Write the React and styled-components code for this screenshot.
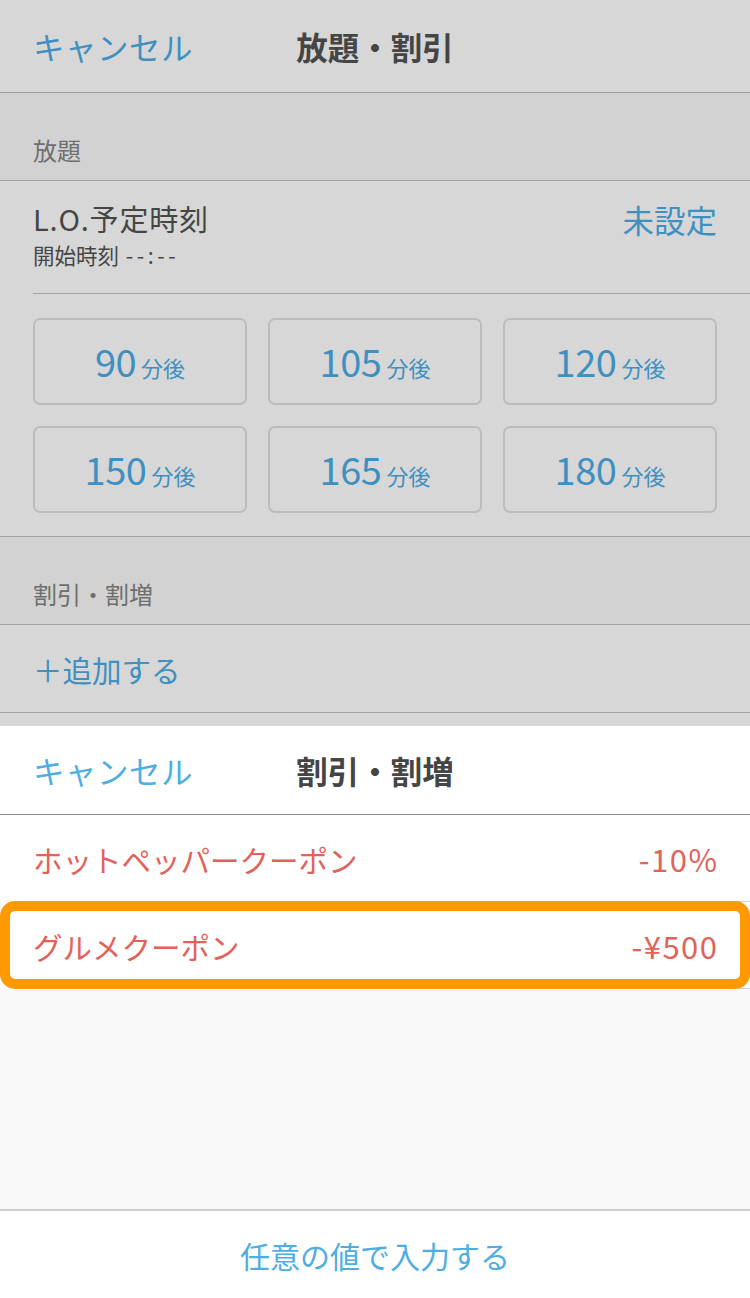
import React from "react";
import styled, { createGlobalStyle } from "styled-components";

const GlobalStyle = createGlobalStyle`
  html, body {
    margin: 0;
    padding: 0;
    background: #ffffff;
  }
  body {
    font-family: "Noto Sans CJK JP", "Noto Sans", sans-serif;
  }
`;

const DIM_BLUE = "#3f90c1";
const BLUE = "#4eaee2";
const RED = "#e2625a";

const Screen = styled.div`
  width: 750px;
  height: 1298px;
  display: flex;
  flex-direction: column;
  overflow: hidden;
`;

const BackPage = styled.div`
  background: #d7d7d7;
  height: 726px;
  display: flex;
  flex-direction: column;
  flex-shrink: 0;
`;

const NavBar = styled.div`
  position: relative;
  display: flex;
  align-items: center;
  padding: 0 33px;
  border-bottom: 1px solid #9a9a9a;
  background: ${(p) => (p.$light ? "#ffffff" : "transparent")};
  box-sizing: border-box;
  height: 89px;
`;

const NavCancel = styled.span`
  font-size: 31.5px;
  color: ${(p) => p.$color};
  letter-spacing: 0.5px;
`;

const NavTitle = styled.span`
  position: absolute;
  left: 0;
  right: 0;
  text-align: center;
  font-size: 31.5px;
  font-weight: 700;
  color: #454545;
  pointer-events: none;
`;

const TopBar = styled(NavBar)`
  height: 93px;
`;

const SectionHeader = styled.div`
  height: 88px;
  box-sizing: border-box;
  background: #d2d2d2;
  border-bottom: 1px solid #a3a3a3;
  display: flex;
  align-items: flex-end;
  padding: 0 33px 13px;
  font-size: 24px;
  color: #6e6e6e;
`;

const TimeRow = styled.div`
  margin-left: 33px;
  padding-right: 33px;
  height: 113px;
  box-sizing: border-box;
  border-bottom: 1px solid #a3a3a3;
  display: flex;
  justify-content: space-between;
  align-items: flex-start;
  padding-top: 18px;
`;

const TimeLabels = styled.div`
  display: flex;
  flex-direction: column;
`;

const TimeTitle = styled.span`
  font-size: 29px;
  color: #454545;
  line-height: 38px;
  letter-spacing: 0.8px;
`;

const TimeSub = styled.span`
  font-size: 21.5px;
  color: #454545;
  line-height: 36px;
`;

const Dashes = styled.span`
  letter-spacing: 3.5px;
  margin-left: 2px;
`;

const TimeValue = styled.span`
  font-size: 31.5px;
  color: ${DIM_BLUE};
  line-height: 40px;
`;

const ButtonGrid = styled.div`
  display: grid;
  grid-template-columns: repeat(3, 1fr);
  column-gap: 21px;
  row-gap: 21px;
  padding: 24px 33px 23px;
  border-bottom: 1px solid #a3a3a3;
`;

const TimeButton = styled.div`
  height: 87px;
  box-sizing: border-box;
  border: 2px solid #bcbcbc;
  border-radius: 7px;
  display: flex;
  align-items: baseline;
  justify-content: center;
  padding-top: 19px;
  color: ${DIM_BLUE};
`;

const Minutes = styled.span`
  font-size: 38px;
  line-height: 44px;
  letter-spacing: -0.5px;
`;

const Unit = styled.span`
  font-size: 22px;
  margin-left: 5px;
`;

const AddRow = styled.div`
  height: 88px;
  box-sizing: border-box;
  border-bottom: 1px solid #a3a3a3;
  display: flex;
  align-items: center;
  padding: 0 33px;
  font-size: 29.5px;
  color: ${DIM_BLUE};
`;

const Sheet = styled.div`
  flex: 1;
  display: flex;
  flex-direction: column;
  background: #f9f9f9;
`;

const SheetHeader = styled(NavBar)`
  height: 89px;
  border-bottom-color: #8e8e8e;
`;

const CouponRow = styled.div`
  position: relative;
  height: 87px;
  box-sizing: border-box;
  background: #ffffff;
  display: flex;
  align-items: center;
  justify-content: space-between;
  padding: 0 33px;
  color: ${RED};
  font-size: 29.5px;

  &::after {
    content: "";
    position: absolute;
    left: 33px;
    right: 0;
    bottom: 0;
    border-bottom: 1px solid #d0d0d0;
  }
`;

const Amount = styled.span`
  font-size: 31px;
  letter-spacing: 1.5px;
  margin-right: -1.5px;
`;

const Highlight = styled.div`
  position: absolute;
  inset: -1px 0 0 0;
  border: 10px solid #ff9900;
  border-radius: 15px;
  pointer-events: none;
  z-index: 1;
`;

const Filler = styled.div`
  flex: 1;
  background: #f9f9f9;
`;

const FooterButton = styled.div`
  height: 89px;
  box-sizing: border-box;
  border-top: 2px solid #cfcfcf;
  background: #ffffff;
  display: flex;
  align-items: center;
  justify-content: center;
  font-size: 30px;
  color: ${BLUE};
`;

const minutes = ["90", "105", "120", "150", "165", "180"];

const coupons = [
  { name: "ホットペッパークーポン", amount: "-10%" },
  { name: "グルメクーポン", amount: "-¥500", selected: true },
];

export default function App() {
  return (
    <>
      <GlobalStyle />
      <Screen>
        <BackPage>
          <TopBar>
            <NavCancel $color={DIM_BLUE}>キャンセル</NavCancel>
            <NavTitle>放題・割引</NavTitle>
          </TopBar>
          <SectionHeader>放題</SectionHeader>
          <TimeRow>
            <TimeLabels>
              <TimeTitle>L.O.予定時刻</TimeTitle>
              <TimeSub>
                開始時刻 <Dashes>--:--</Dashes>
              </TimeSub>
            </TimeLabels>
            <TimeValue>未設定</TimeValue>
          </TimeRow>
          <ButtonGrid>
            {minutes.map((m) => (
              <TimeButton key={m}>
                <Minutes>{m}</Minutes>
                <Unit>分後</Unit>
              </TimeButton>
            ))}
          </ButtonGrid>
          <SectionHeader>割引・割増</SectionHeader>
          <AddRow>＋追加する</AddRow>
        </BackPage>
        <Sheet>
          <SheetHeader $light>
            <NavCancel $color={BLUE}>キャンセル</NavCancel>
            <NavTitle>割引・割増</NavTitle>
          </SheetHeader>
          {coupons.map((c) => (
            <CouponRow key={c.name}>
              <span>{c.name}</span>
              <Amount>{c.amount}</Amount>
              {c.selected && <Highlight />}
            </CouponRow>
          ))}
          <Filler />
          <FooterButton>任意の値で入力する</FooterButton>
        </Sheet>
      </Screen>
    </>
  );
}
